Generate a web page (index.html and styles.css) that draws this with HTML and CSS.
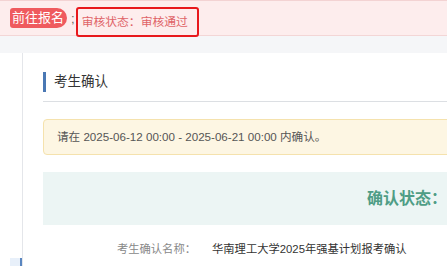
FILE: index.html
```html
<!DOCTYPE html>
<html lang="zh-CN">
<head>
    <meta charset="UTF-8" />
    <meta name="viewport" content="width=device-width, initial-scale=1.0" />
    <title>考生确认</title>
    <link rel="stylesheet" href="styles.css">
</head>
<body>
    <div class="notice">
        <a class="notice-btn" href="#">前往报名</a>
        <span class="notice-sep">;</span>
        <span class="notice-status">审核状态：审核通过</span>
    </div>

    <div class="page">
        <aside class="side">
            <div class="side-item"></div>
        </aside>

        <main class="card">
            <h2 class="card-title">考生确认</h2>

            <div class="alert">请在 2025-06-12 00:00 - 2025-06-21 00:00 内确认。</div>

            <div class="status-box">确认状态：</div>

            <div class="info-row">
                <span class="info-label">考生确认名称：</span>
                <span class="info-value">华南理工大学2025年强基计划报考确认</span>
            </div>
        </main>
    </div>
</body>
</html>
```

FILE: styles.css
```css
/* Base */
body {
    margin: 0;
    padding: 0;
    background-color: #fff;
    color: #333;
    font-family: 'Liberation Sans', 'Noto Sans CJK SC', sans-serif;
    overflow: hidden;
}

/* Notice bar */
.notice {
    display: flex;
    align-items: center;
    height: 34px;
    padding-left: 10px;
    background-color: #fdeded;
    border-top: 1px solid #f3d3d3;
    border-bottom: 1px solid #f3d6d6;
}

.notice-btn {
    display: inline-block;
    height: 20px;
    line-height: 20px;
    padding: 0 3px 0 2px;
    font-size: 13px;
    color: #fff;
    text-decoration: none;
    background-color: #ef5a5e;
    border-radius: 3px 10px 10px 3px;
}

.notice-sep {
    margin-left: 4px;
    font-size: 13px;
    color: #666;
}

.notice-status {
    align-self: flex-start;
    box-sizing: border-box;
    height: 30px;
    line-height: 26px;
    margin-left: 1px;
    margin-top: 6px;
    padding: 0 9px 0 4px;
    font-size: 11.8px;
    color: #e06468;
    border: 2px solid #e8181c;
    border-radius: 3px;
}

/* Layout */
.page {
    display: flex;
    background-color: #f5f6f8;
    padding-top: 17px;
    min-height: 300px;
}

.side {
    flex-shrink: 0;
    width: 22px;
    background-color: #fff;
}

.side-item {
    margin-top: 205px;
    margin-left: 10px;
    height: 20px;
    background-color: #e8f0fa;
    border-right: 2px solid #5a86c0;
}

.card {
    flex-shrink: 0;
    width: 728px;
    padding: 17px 20px 0 20px;
    background-color: #fff;
    border-left: 1px solid #e4e6ea;
}

.card-title {
    margin: 0;
    padding-bottom: 9px;
    font-size: 13.5px;
    font-weight: normal;
    color: #333;
    border-bottom: 1px solid #dcdfe3;
}

.card-title::before {
    content: "";
    display: inline-block;
    width: 3px;
    height: 20px;
    margin-right: 8px;
    vertical-align: middle;
    background-color: #4a78b4;
}

/* Alert */
.alert {
    box-sizing: border-box;
    height: 36px;
    line-height: 34px;
    margin-top: 17px;
    padding-left: 13px;
    font-size: 11.6px;
    color: #555;
    background-color: #fdf6e3;
    border: 1px solid #f5e2ad;
    border-radius: 4px;
}

/* Status */
.status-box {
    height: 53px;
    line-height: 53px;
    margin-top: 17px;
    text-align: center;
    font-size: 16px;
    font-weight: bold;
    color: #4f9d85;
    background-color: #ecf5f4;
}

.info-row {
    display: grid;
    grid-template-columns: 153px auto;
    gap: 16px;
    margin-top: 15px;
    font-size: 11.3px;
}

.info-label {
    text-align: right;
    color: #888;
}

.info-value {
    color: #333;
}
```
